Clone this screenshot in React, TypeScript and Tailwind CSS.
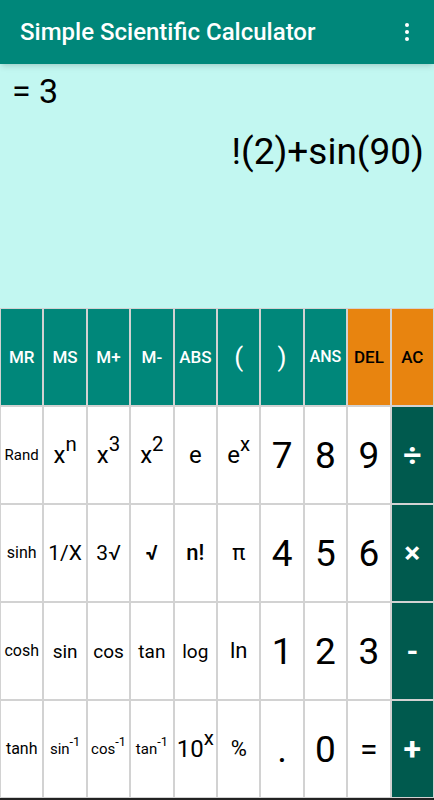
import React from "react"

type Key = {
  label: React.ReactNode
  kind: "mem" | "warn" | "fn" | "num" | "op"
  size: string
}

const sup = (base: string, exp: string) => (
  <span className="inline-flex items-start">
    <span>{base}</span>
    <span className="-mt-[0.45em] text-[0.85em]">{exp}</span>
  </span>
)

const keys: Key[] = [
  { label: "MR", kind: "mem", size: "text-[17px] font-medium" },
  { label: "MS", kind: "mem", size: "text-[17px] font-medium" },
  { label: "M+", kind: "mem", size: "text-[17px] font-medium" },
  { label: "M-", kind: "mem", size: "text-[17px] font-medium" },
  { label: "ABS", kind: "mem", size: "text-[17px] font-medium" },
  { label: "(", kind: "mem", size: "text-[26px]" },
  { label: ")", kind: "mem", size: "text-[26px]" },
  { label: "ANS", kind: "mem", size: "text-[16px] font-medium" },
  { label: "DEL", kind: "warn", size: "text-[17px] font-medium" },
  { label: "AC", kind: "warn", size: "text-[17px] font-medium" },

  { label: "Rand", kind: "fn", size: "text-[15px]" },
  { label: sup("x", "n"), kind: "fn", size: "text-[24px]" },
  { label: sup("x", "3"), kind: "fn", size: "text-[24px]" },
  { label: sup("x", "2"), kind: "fn", size: "text-[24px]" },
  { label: "e", kind: "fn", size: "text-[24px]" },
  { label: sup("e", "x"), kind: "fn", size: "text-[24px]" },
  { label: "7", kind: "num", size: "text-[37px]" },
  { label: "8", kind: "num", size: "text-[37px]" },
  { label: "9", kind: "num", size: "text-[37px]" },
  { label: "÷", kind: "op", size: "text-[32px] font-bold" },

  { label: "sinh", kind: "fn", size: "text-[16px]" },
  { label: "1/X", kind: "fn", size: "text-[21px]" },
  { label: "3√", kind: "fn", size: "text-[21px]" },
  { label: "√", kind: "fn", size: "text-[21px] font-bold" },
  { label: "n!", kind: "fn", size: "text-[22px] font-medium" },
  { label: "π", kind: "fn", size: "text-[22px]" },
  { label: "4", kind: "num", size: "text-[37px]" },
  { label: "5", kind: "num", size: "text-[37px]" },
  { label: "6", kind: "num", size: "text-[37px]" },
  { label: "×", kind: "op", size: "text-[30px] font-bold" },

  { label: "cosh", kind: "fn", size: "text-[16px]" },
  { label: "sin", kind: "fn", size: "text-[19px]" },
  { label: "cos", kind: "fn", size: "text-[19px]" },
  { label: "tan", kind: "fn", size: "text-[19px]" },
  { label: "log", kind: "fn", size: "text-[19px]" },
  { label: "ln", kind: "fn", size: "text-[22px]" },
  { label: "1", kind: "num", size: "text-[37px]" },
  { label: "2", kind: "num", size: "text-[37px]" },
  { label: "3", kind: "num", size: "text-[37px]" },
  { label: "-", kind: "op", size: "text-[30px] font-bold" },

  { label: "tanh", kind: "fn", size: "text-[16px]" },
  { label: sup("sin", "-1"), kind: "fn", size: "text-[15px]" },
  { label: sup("cos", "-1"), kind: "fn", size: "text-[15px]" },
  { label: sup("tan", "-1"), kind: "fn", size: "text-[15px]" },
  { label: sup("10", "x"), kind: "fn", size: "text-[24px]" },
  { label: "%", kind: "fn", size: "text-[22px]" },
  { label: ".", kind: "num", size: "text-[37px]" },
  { label: "0", kind: "num", size: "text-[37px]" },
  { label: "=", kind: "num", size: "text-[32px]" },
  { label: "+", kind: "op", size: "text-[32px] font-bold" },
]

const kindClass: Record<Key["kind"], string> = {
  mem: "bg-[#00877a] text-white",
  warn: "bg-[#e8840f] text-black",
  fn: "bg-white text-black",
  num: "bg-white text-black",
  op: "bg-[#005a4e] text-white",
}

export default function App() {
  return (
    <div className="flex h-[800px] w-[434px] flex-col overflow-hidden font-['Roboto',sans-serif]">
      {/* toolbar */}
      <header className="relative z-10 flex h-[64px] shrink-0 items-center justify-between bg-[#00877a] pl-5 pr-[15px] shadow-md">
        <h1 className="text-[24px] font-medium text-white">Simple Scientific Calculator</h1>
        <svg width="24" height="24" viewBox="0 0 24 24" fill="white">
          <circle cx="12" cy="5" r="2" />
          <circle cx="12" cy="12" r="2" />
          <circle cx="12" cy="19" r="2" />
        </svg>
      </header>

      {/* display */}
      <div className="flex h-[244px] shrink-0 flex-col bg-[#c2f7f1] pl-3 pr-[10px] pt-[4px]">
        <div className="text-[34px] leading-[46px] text-black">= 3</div>
        <div className="mt-[14px] text-right text-[37px] leading-[48px] text-black">!(2)+sin(90)</div>
      </div>

      {/* keypad */}
      <div className="grid h-[490px] shrink-0 grid-cols-10 grid-rows-5 gap-[2px] bg-[#d2d2d2] p-[1px]">
        {keys.map((k, i) => (
          <button
            key={i}
            className={`flex items-center justify-center overflow-hidden whitespace-nowrap leading-none ${kindClass[k.kind]} ${k.size}`}
          >
            {k.label}
          </button>
        ))}
      </div>
      <div className="h-[2px] shrink-0 bg-[#222]" />
    </div>
  )
}
